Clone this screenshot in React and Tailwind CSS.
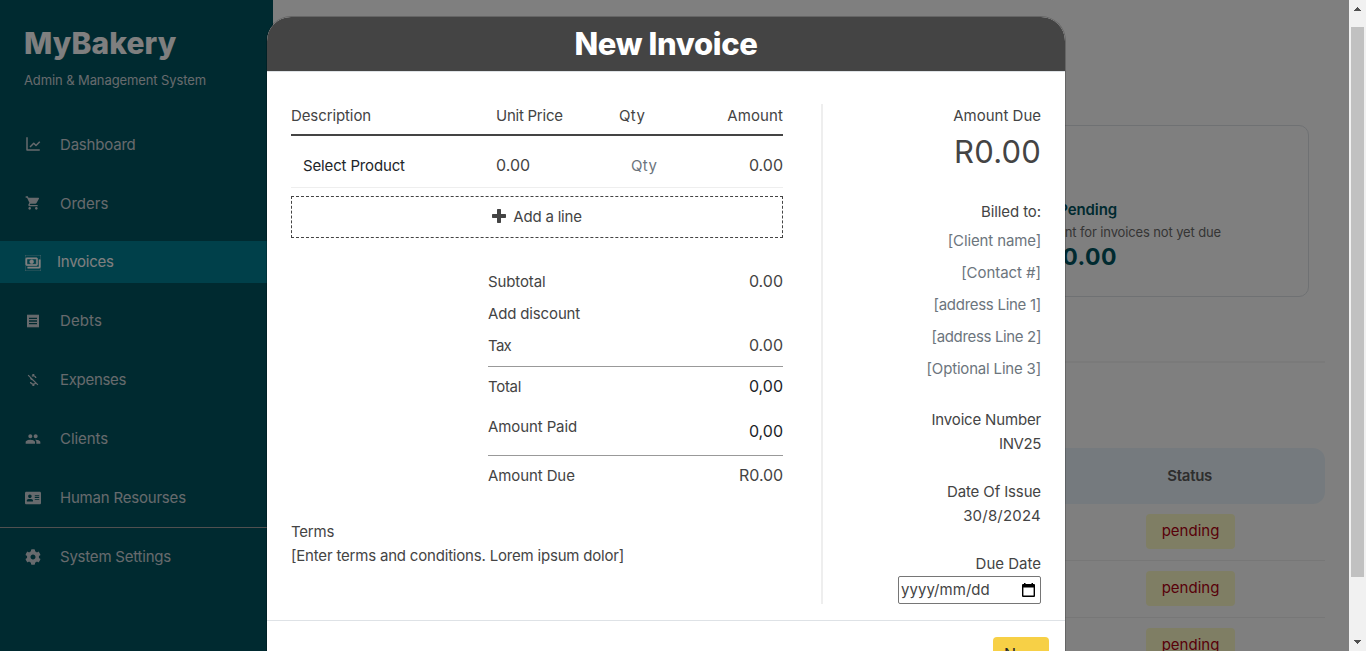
import { BiLineChart } from "react-icons/bi";
import { MdShoppingCart, MdOutlinePayments, MdReceipt, MdMoneyOff, MdPeople } from "react-icons/md";
import { FaAddressCard, FaCog } from "react-icons/fa";

const menu = [
  { label: "Dashboard", icon: <BiLineChart size={18} className="-mt-[2px]" />, text: "tracking-[-0.2px]" },
  { label: "Orders", icon: <MdShoppingCart size={16} className="-mt-[2px]" />, text: "" },
  {
    label: "Invoices",
    icon: <MdOutlinePayments size={16} className="mt-[2px] stroke-current stroke-[0.7]" />,
    text: "tracking-[-0.25px]",
    active: true,
  },
  { label: "Debts", icon: <MdReceipt size={16} className="-mt-px" />, text: "tracking-[0.1px]" },
  { label: "Expenses", icon: <MdMoneyOff size={16} className="-mt-px" />, text: "tracking-[-0.3px]" },
  { label: "Clients", icon: <MdPeople size={16} className="-mt-px" />, text: "tracking-[-0.05px]" },
  { label: "Human Resourses", icon: <FaAddressCard size={16} className="-mt-px" />, text: "tracking-[-0.2px]" },
];

function MenuItem({ item }) {
  return (
    <a
      className={
        item.active
          ? "-mt-px flex h-[42px] items-center bg-[#008094] pl-6 text-white"
          : "flex h-[42px] items-center pl-6 text-[#ced4da]"
      }
    >
      <span className="flex w-[18px] shrink-0 justify-center">{item.icon}</span>
      <span className={`${item.active ? "ml-[15px]" : "ml-[18px]"} ${item.text}`}>{item.label}</span>
    </a>
  );
}

function Sidebar() {
  return (
    <aside className="flex h-full w-[273px] shrink-0 flex-col bg-[#005461]">
      <div className="h-[124px] pl-6 pt-[23px]">
        <h1 className="text-[30px] font-extrabold leading-[40px] tracking-[0.1px] text-white">MyBakery</h1>
        <p className="mt-[7px] text-[13px] leading-5 tracking-[-0.1px] text-[#ced4da]">Admin &amp; Management System</p>
      </div>
      <nav className="flex flex-col gap-[17px]">
        {menu.map((item) => (
          <MenuItem key={item.label} item={item} />
        ))}
      </nav>
      <div className="mt-2 border-t border-[#a0a0a0] pt-2">
        <MenuItem item={{ label: "System Settings", icon: <FaCog size={16} className="-mt-px" />, text: "tracking-[-0.22px]" }} />
      </div>
    </aside>
  );
}

function PendingRow() {
  return (
    <div className="flex h-[57px] shrink-0 items-start justify-end border-b border-[#eeeeee] pr-[90px] pt-[10px]">
      <span className="flex h-[35px] w-[89px] items-center justify-center rounded bg-[#fffcc8] text-[#b00012]">
        pending
      </span>
    </div>
  );
}

function Content() {
  return (
    <main className="flex min-w-0 flex-1 flex-col bg-white pl-6 pr-6 pt-[125px]">
      <div className="mr-4 flex h-[172px] shrink-0 flex-col items-end rounded-[10px] border border-[#dee2e6] pr-[87px] pt-[72px]">
        <p className="pr-[104px] font-semibold leading-6 tracking-[-0.1px] text-[#005461]">Pending</p>
        <p className="text-[13px] leading-5 tracking-[-0.13px] text-[#6b6b6b]">Amount for invoices not yet due</p>
        <p className="pr-[104px] text-[23px] font-bold leading-[30px] tracking-[0.5px] text-[#005461]">R0.00</p>
      </div>
      <div className="mt-[64px] h-[2px] shrink-0 bg-[#f4f4f4]" />
      <div className="mt-[85px] flex h-14 shrink-0 items-center justify-end rounded-xl bg-[#ebf5fc] pr-[113px] font-semibold tracking-[-0.3px] text-[#5c5c5c]">
        Status
      </div>
      <PendingRow />
      <PendingRow />
      <PendingRow />
    </main>
  );
}

function Scrollbar() {
  return (
    <div className="flex w-[17px] shrink-0 flex-col items-center justify-between bg-[#f1f1f1]">
      <svg width="7" height="4" viewBox="0 0 7 4" className="mt-[7px] fill-[#505050]" shapeRendering="crispEdges">
        <path d="M3 0h1v1h1v1h1v1h1v1H0V3h1V2h1V1h1z" />
      </svg>
      <div className="-mt-[47px] h-[550px] w-[13px] bg-[#c1c1c1]" />
      <svg width="7" height="4" viewBox="0 0 7 4" className="mb-[7px] fill-[#505050]" shapeRendering="crispEdges">
        <path d="M0 0h7v1H6v1H5v1H4v1H3V3H2V2H1V1H0z" />
      </svg>
    </div>
  );
}

function Line({ label, value, text, className, valueClass }) {
  return (
    <div className={`flex justify-between leading-6 ${className}`}>
      <span className={text}>{label}</span>
      <span className={`text-[16px] leading-[23px] ${valueClass || ""}`}>{value}</span>
    </div>
  );
}

function Items() {
  return (
    <section className="flex w-[492px] shrink-0 flex-col">
      <div className="flex h-8 border-b-2 border-[#444444] leading-6">
        <span className="w-[205px] tracking-[-0.1px]">Description</span>
        <span className="w-[123px] tracking-[-0.25px]">Unit Price</span>
        <span className="flex-1 tracking-[0.4px]">Qty</span>
        <span className="tracking-[0.1px]">Amount</span>
      </div>
      <div className="flex h-[52px] border-b border-[#eeeeee] pt-[18px] leading-6">
        <span className="w-[205px] pl-3 tracking-[-0.15px] text-[#212529]">Select Product</span>
        <span className="w-[123px] text-[16px] leading-[23px]">0.00</span>
        <span className="flex-1 pl-3 tracking-[0.4px] text-[#6c757d]">Qty</span>
        <span className="text-[16px] leading-[23px]">0.00</span>
      </div>
      <button className="mt-2 flex h-[42px] items-center justify-center gap-[7px] border border-dashed border-[#444444] tracking-[-0.2px]">
        <svg width="14" height="14" viewBox="0 0 14 14" className="-mt-0.5 fill-[#444444]">
          <path d="M5.7 0h2.6q.7 0 .7.7V5h4.3q.7 0 .7.7v2.6q0 .7-.7.7H9v4.3q0 .7-.7.7H5.7q-.7 0-.7-.7V9H.7Q0 9 0 8.300V5.7Q0 5 .7 5H5V.7Q5 0 5.700 0z" />
        </svg>
        Add a line
      </button>
      <div className="ml-[197px] mt-8 flex flex-col">
        <Line label="Subtotal" value="0.00" text="tracking-[-0.12px]" className="mb-2" />
        <Line label="Add discount" value="" text="tracking-[-0.15px]" className="mb-2" />
        <Line label="Tax" value="0.00" text="tracking-[-0.7px]" className="h-[33px] border-b border-[#999999]" />
        <Line label="Total" value="0,00" text="tracking-[-0.3px]" className="mt-2" valueClass="text-[#212529]" />
        <Line
          label="Amount Paid"
          value="0,00"
          text="tracking-[-0.1px]"
          className="mt-4 h-[41px] border-b border-[#999999]"
          valueClass="pt-[5px] text-[#212529]"
        />
        <Line label="Amount Due" value="R0.00" text="tracking-[-0.1px]" className="mt-2" valueClass="tracking-[-0.1px]" />
      </div>
      <div className="mt-8 leading-6">
        <p className="tracking-[-0.2px]">Terms</p>
        <p className="tracking-[-0.19px]">[Enter terms and conditions. Lorem ipsum dolor]</p>
      </div>
    </section>
  );
}

function Billing() {
  return (
    <section className="flex flex-1 flex-col text-right leading-6">
      <p>Amount Due</p>
      <p className="text-[31px] leading-[48px] tracking-[0.2px]">R0.00</p>
      <p className="mt-6 tracking-[-0.1px]">Billed to:</p>
      <div className="mt-[5px] flex flex-col gap-2 text-[#6c757d]">
        <p className="tracking-[-0.13px]">[Client name]</p>
        <p className="tracking-[-0.05px]">[Contact #]</p>
        <p className="tracking-[-0.28px]">[address Line 1]</p>
        <p className="tracking-[-0.35px]">[address Line 2]</p>
        <p className="tracking-[-0.18px]">[Optional Line 3]</p>
      </div>
      <p className="mt-[27px] tracking-[-0.17px]">Invoice Number</p>
      <p className="tracking-[-0.4px]">INV25</p>
      <p className="mt-6 tracking-[-0.13px]">Date Of Issue</p>
      <p className="tracking-[0.2px]">30/8/2024</p>
      <p className="mt-6">Due Date</p>
      <div className="flex h-7 w-[143px] items-center justify-between self-end rounded-[2px] border border-[#767676] pl-[2px] pr-[5px]">
        <span className="tracking-[0.05px]">yyyy/mm/dd</span>
        <svg width="13" height="14" viewBox="0 0 13 14" className="-mt-px fill-black">
          <path d="M2 0h1.5v1h6V0H11v1h1a1 1 0 0 1 1 1v11a1 1 0 0 1-1 1H1a1 1 0 0 1-1-1V2a1 1 0 0 1 1-1h1zM1.4 4.6v8h10.2v-8z" fillRule="evenodd" />
        </svg>
      </div>
    </section>
  );
}

function InvoiceModal() {
  return (
    <div className="absolute left-[266px] top-4 flex h-[700px] w-[800px] flex-col rounded-t-[25px] border border-black/20 bg-white bg-clip-padding">
      <header className="flex h-[55px] shrink-0 items-center justify-center rounded-t-[24px] border-b border-[#dee2e6] bg-[#444444]">
        <h2 className="text-[31px] font-extrabold leading-[38px] tracking-[-0.35px] text-white">New Invoice</h2>
      </header>
      <div className="flex h-[548px] shrink-0 pl-6 pr-6 pt-8">
        <Items />
        <div className="ml-[38px] h-[500px] w-[2px] shrink-0 bg-[#eeeeee]" />
        <Billing />
      </div>
      <footer className="flex justify-end border-t border-[#dee2e6] pr-4 pt-4">
        <button className="h-[38px] w-14 rounded bg-[#f7d046] pb-1 text-[16px] text-[#212529]">New</button>
      </footer>
    </div>
  );
}

export default function App() {
  return (
    <div className="flex h-[651px] w-[1366px] overflow-hidden font-[Inter,sans-serif] text-[15px] font-[390] text-[#444444]">
      <div className="relative flex min-w-0 flex-1 overflow-hidden">
        <Sidebar />
        <Content />
        <div className="absolute inset-0 bg-black/50" />
        <InvoiceModal />
      </div>
      <Scrollbar />
    </div>
  );
}
